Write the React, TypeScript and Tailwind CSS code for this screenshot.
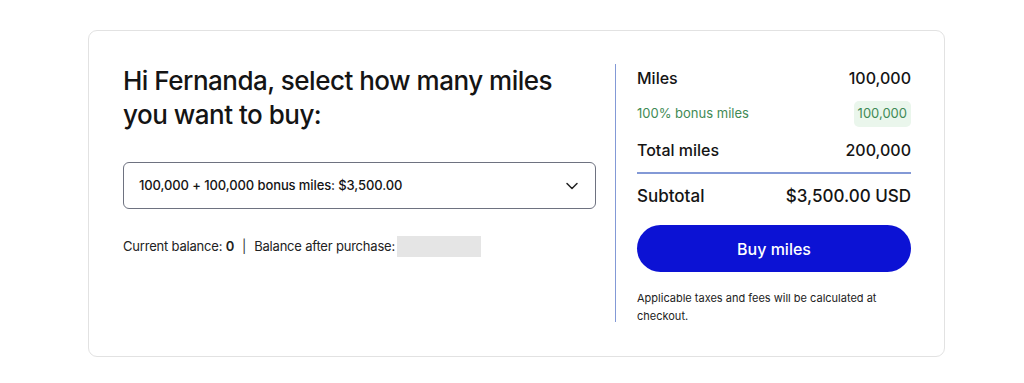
import { ChevronDown } from "lucide-react";

const rows = [
  { label: "Miles", value: "100,000" },
  { label: "Total miles", value: "200,000" },
];

export default function App() {
  return (
    <div className="w-[1024px] h-[383px] bg-white pt-[30px] pl-[88px] font-['Inter',sans-serif] text-[#141414]">
      <div className="w-[857px] h-[327px] border border-[#e2e2e2] rounded-[9px] flex pl-[34px] pt-[33px]">
        {/* left: selection */}
        <div className="w-[473px] shrink-0">
          <h1 className="text-[26px] leading-[34px] font-medium tracking-[-0.5px]">
            Hi Fernanda, select how many miles you want to buy:
          </h1>
          <button className="mt-[30px] w-full h-[47px] border border-[#6e7280] rounded-[6px] flex items-center justify-between pl-[15px] pr-[13px]">
            <span className="text-[13px] font-medium tracking-[-0.1px]">100,000 + 100,000 bonus miles: $3,500.00</span>
            <ChevronDown className="w-5 h-5 text-[#222]" strokeWidth={1.8} />
          </button>
          <div className="mt-[27px] flex items-center text-[13px] tracking-[-0.2px] text-[#222]">
            <span>Current balance: <span className="font-semibold">0</span></span>
            <span className="mx-[8px] text-[#333]">|</span>
            <span>Balance after purchase:</span>
            <span className="ml-[2px] w-[84px] h-[21px] bg-[#e5e5e5]" />
          </div>
        </div>

        {/* divider */}
        <div className="ml-[19px] w-px h-[258px] bg-[#8399d6]" />

        {/* right: summary */}
        <div className="ml-[21px] w-[274px]">
          <div className="flex justify-between items-center h-[28px] text-[16px] font-medium">
            <span>{rows[0].label}</span>
            <span>{rows[0].value}</span>
          </div>
          <div className="flex justify-between items-center mt-[9px] h-[26px]">
            <span className="text-[13px] text-[#3f8a55]">100% bonus miles</span>
            <span className="text-[13px] text-[#3f8a55] bg-[#eaf6ec] rounded-[5px] px-[4px] h-[26px] flex items-center">100,000</span>
          </div>
          <div className="flex justify-between items-center mt-[9px] h-[28px] text-[16px] font-medium">
            <span>{rows[1].label}</span>
            <span>{rows[1].value}</span>
          </div>
          <div className="mt-[8px] h-[2px] bg-[#8399d6]" />
          <div className="flex justify-between items-center mt-[9px] h-[28px] text-[17px] font-medium">
            <span>Subtotal</span>
            <span>$3,500.00 USD</span>
          </div>
          <button className="mt-[14px] w-full h-[47px] rounded-full bg-[#0c12d4] text-white text-[16px] font-medium">
            Buy miles
          </button>
          <p className="mt-[17px] text-[11px] leading-[18px] text-[#222] pr-[10px]">
            Applicable taxes and fees will be calculated at checkout.
          </p>
        </div>
      </div>
    </div>
  );
}
